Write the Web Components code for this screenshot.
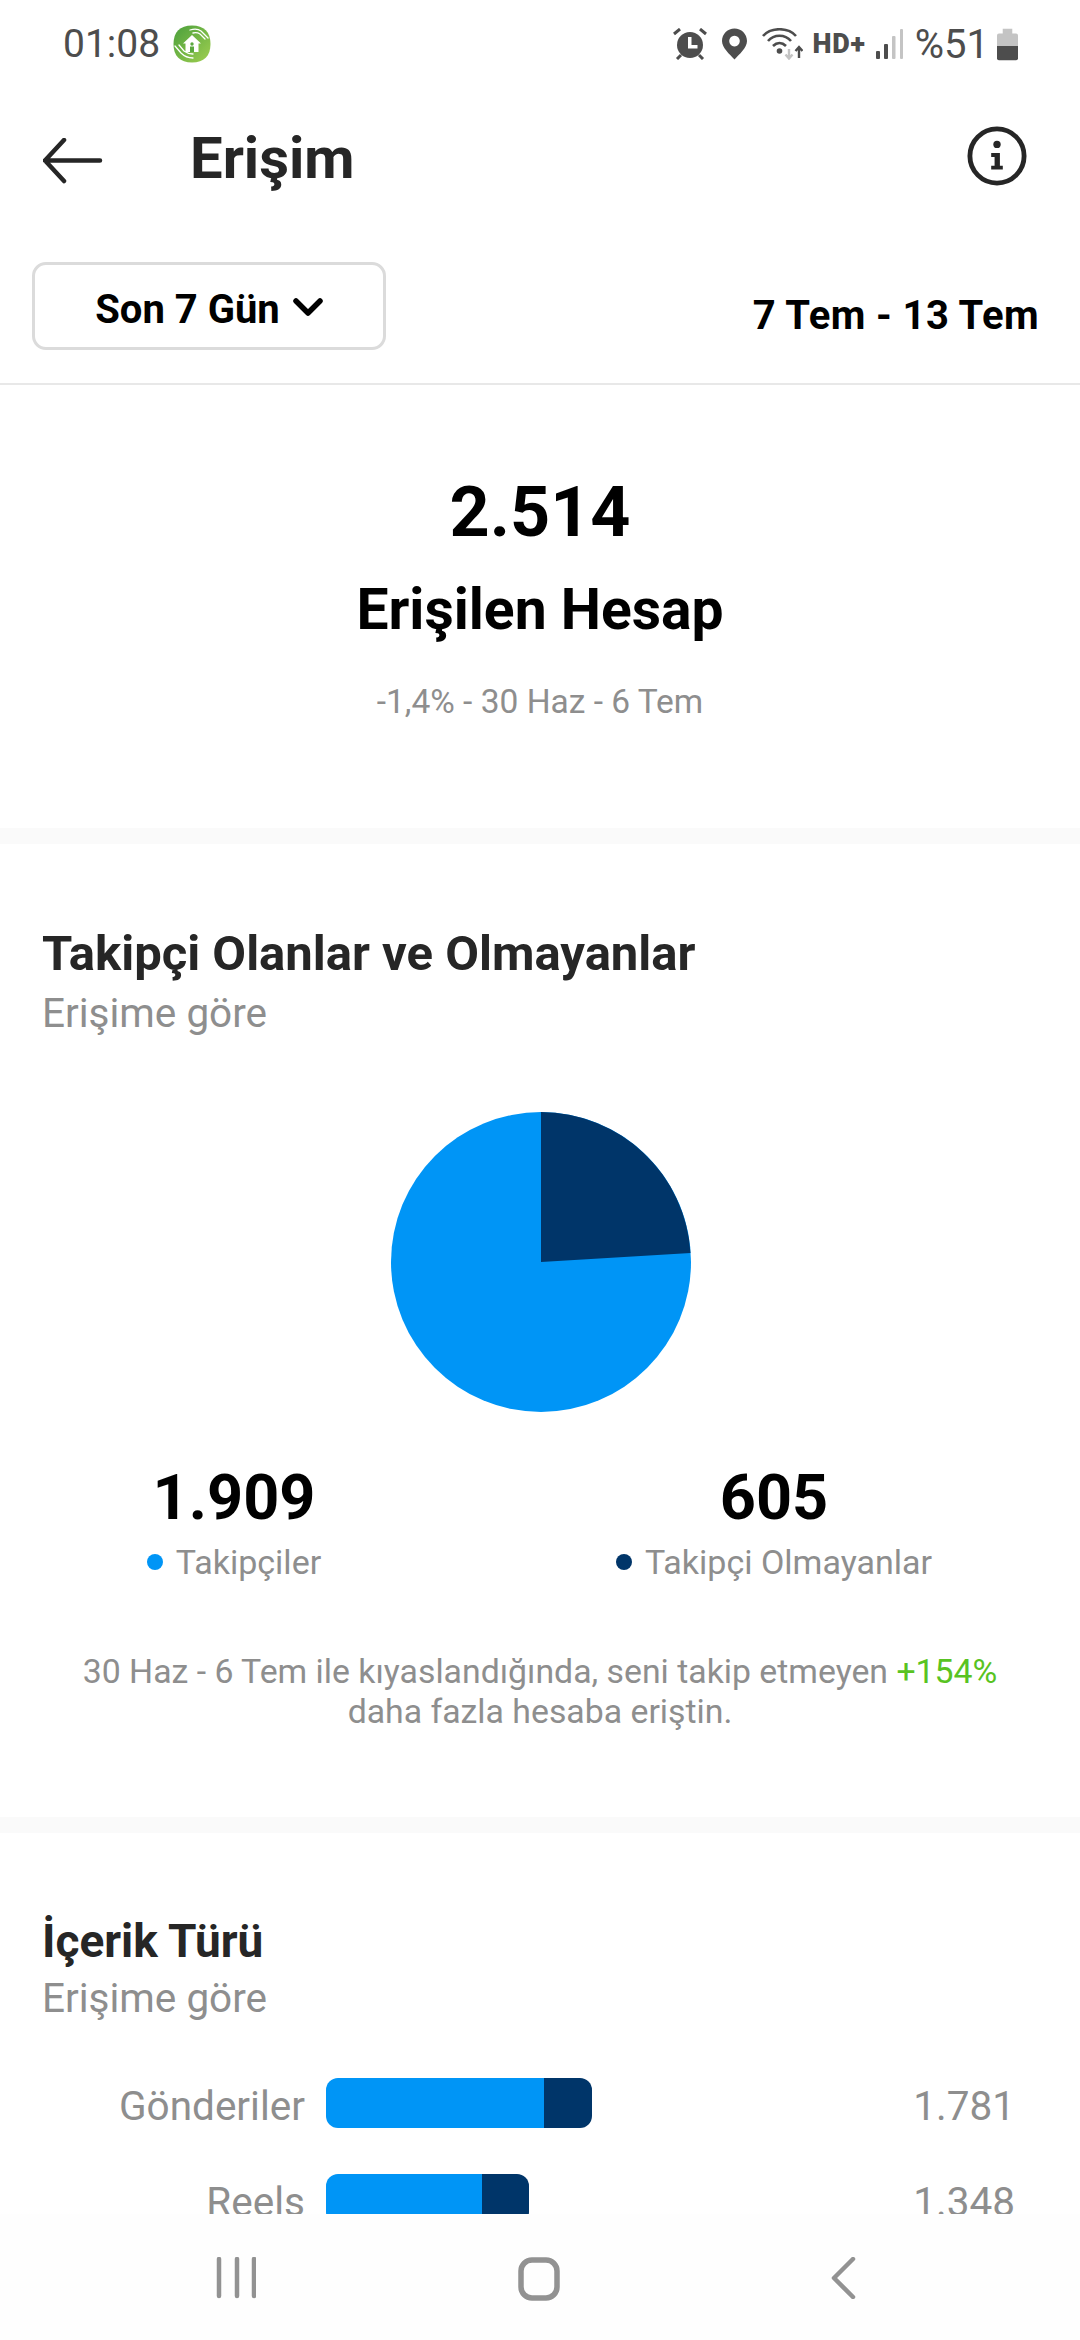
<!DOCTYPE html>
<html lang="tr">
<head>
<meta charset="utf-8">
<title>Erişim</title>
<style>
  html, body { margin: 0; padding: 0; background: #fff; }
  body { font-family: Roboto, "Liberation Sans", sans-serif; width: 1080px; height: 2340px; overflow: hidden; }
</style>
</head>
<body>
<phone-shell>
  <status-bar></status-bar>
  <app-header>Erişim</app-header>
  <range-filter label="Son 7 Gün" dates="7 Tem - 13 Tem"></range-filter>
  <reach-summary value="2.514" label="Erişilen Hesap" note="-1,4% - 30 Haz - 6 Tem"></reach-summary>
  <info-card heading="Takipçi Olanlar ve Olmayanlar" sub="Erişime göre" style="--top:82px;--size:49px;--sub-gap:6px">
    <pie-chart></pie-chart>
    <div style="display:flex">
      <stat-block value="1.909" label="Takipçiler" color="#0095f6" style="width:468px"></stat-block>
      <stat-block value="605" label="Takipçi Olmayanlar" color="#003569" style="width:612px"></stat-block>
    </div>
    <compare-note>30 Haz - 6 Tem ile kıyaslandığında, seni takip etmeyen <b>+154%</b><br>daha fazla hesaba eriştin.</compare-note>
  </info-card>
  <info-card heading="İçerik Türü" sub="Erişime göre" last style="--top:80px;--size:46px;--sub-gap:4px">
    <bar-row label="Gönderiler" value="1.781" a="218" b="48"></bar-row>
    <bar-row label="Reels" value="1.348" a="156" b="47"></bar-row>
  </info-card>
  <nav-bar slot="nav"></nav-bar>
</phone-shell>

<script>
// tiny helper, every element below just stamps its html into an open shadow root
function shadow(el, html) {
  el.attachShadow({mode: 'open'}).innerHTML = html
}

class PhoneShell extends HTMLElement {
  constructor() {
    super()
    shadow(this, `
    <style>
      :host { display: flex; flex-direction: column; width: 1080px; height: 2340px; background: #fff; }
      .scroll { height: 2214px; overflow: hidden; flex: none; }
      .nav { flex: 1; }
    </style>
    <div class="scroll"><slot></slot></div>
    <div class="nav"><slot name="nav"></slot></div>`)
  }
}

class StatusBar extends HTMLElement {
  constructor() {
    super()
    shadow(this, `
    <style>
      :host { display: flex; align-items: center; height: 88px; box-sizing: border-box; padding: 0 62px 0 63px; color: #4d4d4d; font-size: 39px; }
      .left, .right { display: flex; align-items: center; }
      .left { gap: 13px; flex: 1; }
      svg { display: block; }
    </style>
    <div class="left">
      <span>01:08</span>
      <svg width="38" height="38" viewBox="0 0 38 38">
        <defs><linearGradient id="g" x1="0" y1="0" x2="1" y2="1"><stop offset="0" stop-color="#4a9f3c"/><stop offset="1" stop-color="#a0cf50"/></linearGradient></defs>
        <path d="M19 .5 C31 .5 37.500 7 37.500 19 C37.500 31 31 37.500 19 37.500 C7 37.500 .5 31 .5 19 C.5 7 7 .5 19 .5 Z" fill="url(#g)"/>
        <path d="M19 10 L28 18.500 H25.500 V27 H12.500 V18.500 H10 Z" fill="#fff"/>
        <circle cx="19" cy="19" r="1.700" fill="#5aa83f"/>
        <path d="M17 27 V21.500 h4 V27" fill="#5aa83f"/>
        <path d="M17 5 Q24 3 28 6 L35 13 M20 8 Q24 7 27 9 L32 14 M2 21 L8 28 Q13 33 20 33 M6 20 L11 26 Q15 29 20 29" fill="none" stroke="#fff" stroke-width="1.300" stroke-linecap="round"/>
      </svg>
    </div>
    <div class="right">
      <svg width="34" height="32" viewBox="0 0 34 32" style="margin-right:15px">
        <circle cx="17" cy="17" r="13" fill="#4d4d4d"/>
        <path d="M15 9 h3.500 v8 h6 v3.500 h-9.500 Z" fill="#fff"/>
        <path d="M1 6 L7 1 M33 6 L27 1 M4 31 L8 27 M30 31 L26 27" stroke="#4d4d4d" stroke-width="3"/>
      </svg>
      <svg width="25" height="32" viewBox="0 0 26 32" style="margin-right:15px">
        <path fill-rule="evenodd" d="M13 0 C20 0 26 5.500 26 13 C26 20 18 27 13 32 C8 27 0 20 0 13 C0 5.500 6 0 13 0 Z M13 7.500 a5.500 5.500 0 1 0 0.010 0 Z" fill="#4d4d4d"/>
      </svg>
      <svg width="41" height="32" viewBox="0 0 41 32" style="margin-right:9px">
        <g fill="none" stroke="#4d4d4d" stroke-width="2.600">
          <path d="M1 8 C9 -1 26 -1 34 8"/>
          <path d="M6 13 C12 6 23 6 29 13"/>
          <path d="M11 18 C15 14 20 14 24 18"/>
        </g>
        <circle cx="17.500" cy="23" r="2.800" fill="#4d4d4d"/>
        <path d="M27 21 v9 M23.500 26.500 l3.500 4 l3.500 -4" fill="none" stroke="#c4c4c4" stroke-width="2.400"/>
        <path d="M37 30 v-11 M33.500 23 l3.500 -4 l3.500 4" fill="none" stroke="#4d4d4d" stroke-width="2.400"/>
      </svg>
      <span style="font-size:27px;font-weight:900;letter-spacing:.8px;margin-right:10px;">HD+</span>
      <svg width="27" height="30" viewBox="0 0 27 30" style="margin-right:12px">
        <rect x="0" y="22" width="4" height="8" rx="1" fill="#4d4d4d"/>
        <rect x="8" y="15" width="4" height="15" rx="1" fill="#4d4d4d"/>
        <rect x="16" y="7" width="3.500" height="23" rx="1" fill="#c4c4c4"/>
        <rect x="24" y="0" width="3" height="30" rx="1" fill="#c4c4c4"/>
      </svg>
      <span style="font-size:40px;margin-right:8px;">%51</span>
      <svg width="21" height="33" viewBox="0 0 22 33">
        <path d="M6 0 h10 v5 h4 a2 2 0 0 1 2 2 v11 h-22 v-11 a2 2 0 0 1 2 -2 h4 Z" fill="#c4c4c4"/>
        <path d="M0 18 h22 v13 a2 2 0 0 1 -2 2 h-18 a2 2 0 0 1 -2 -2 Z" fill="#4d4d4d"/>
      </svg>
    </div>`)
  }
}

class AppHeader extends HTMLElement {
  constructor() {
    super()
    shadow(this, `
    <style>
      :host { display: flex; align-items: center; height: 72px; margin-top: 34px; padding: 0 53px 0 43px; color: #262626; }
      .title { flex: 1; margin-left: 87px; font-size: 58px; font-weight: 700; line-height: 72px; }
      svg { display: block; }
    </style>
    <svg width="60" height="46" viewBox="0 0 60 46" style="margin-top:6px">
      <path d="M21 2 L2 22.500 L21 43 M2 22.500 H57" fill="none" stroke="#262626" stroke-width="4.500" stroke-linecap="round" stroke-linejoin="round"/>
    </svg>
    <div class="title"><slot></slot></div>
    <svg width="60" height="60" viewBox="0 0 62 62" style="margin-top:-4px">
      <circle cx="31" cy="31" r="28" fill="none" stroke="#262626" stroke-width="5"/>
      <circle cx="31" cy="19" r="3.800" fill="#262626"/>
      <path d="M25 28 h9 v13 h3 v4 h-12 v-4 h3.500 v-9 h-3.500 Z" fill="#262626"/>
    </svg>`)
  }
}

class RangeFilter extends HTMLElement {
  constructor() {
    super()
    shadow(this, `
    <style>
      :host { display: flex; align-items: center; justify-content: space-between; height: 88px; margin-top: 68px; padding: 0 41px 33px 32px; border-bottom: 2px solid #e8e8e8; color: #000; font-weight: 700; font-size: 40px; }
      .btn { display: flex; align-items: center; justify-content: center; gap: 13px; box-sizing: border-box; width: 354px; height: 88px; padding-top: 6px; border: 3px solid #dbdbdb; border-radius: 14px; }
      .dates { padding-top: 18px; letter-spacing: .4px; }
      svg { display: block; }
    </style>
    <div class="btn"><span>${this.getAttribute('label')}</span>
      <svg width="30" height="18" viewBox="0 0 30 18" style="margin-bottom:4px"><path d="M3 3 L15 15 L27 3" fill="none" stroke="#000" stroke-width="5.500" stroke-linecap="round" stroke-linejoin="round"/></svg>
    </div>
    <div class="dates">${this.getAttribute('dates')}</div>`)
  }
}

class ReachSummary extends HTMLElement {
  constructor() {
    super()
    shadow(this, `
    <style>
      :host { display: flex; flex-direction: column; align-items: center; height: 443px; border-bottom: 16px solid #fafafa; }
      .value { margin-top: 87px; font-size: 70px; font-weight: 700; line-height: 80px; color: #000; }
      .label { margin-top: 26px; font-size: 57px; font-weight: 700; line-height: 64px; color: #000; }
      .note { margin-top: 38px; font-size: 33.500px; line-height: 44px; color: #8e8e8e; }
    </style>
    <div class="value">${this.getAttribute('value')}</div>
    <div class="label">${this.getAttribute('label')}</div>
    <div class="note">${this.getAttribute('note')}</div>`)
  }
}

class InfoCard extends HTMLElement {
  constructor() {
    super()
    const last = this.hasAttribute('last')
    shadow(this, `
    <style>
      :host { display: block; ${last ? '' : 'border-bottom: 16px solid #fafafa;'} }
      .head { padding: var(--top) 42px 0; }
      h2 { margin: 0; font-size: var(--size); line-height: 56px; font-weight: 700; color: #262626; }
      p { margin: var(--sub-gap) 0 0; font-size: 40.500px; line-height: 50px; color: #8e8e8e; }
    </style>
    <div class="head">
      <h2>${this.getAttribute('heading')}</h2>
      <p>${this.getAttribute('sub')}</p>
    </div>
    <slot></slot>`)
  }
}

class PieChart extends HTMLElement {
  constructor() {
    super()
    shadow(this, `
    <style>
      :host { display: flex; justify-content: center; margin-top: 74px; padding-left: 2px; }
      svg { display: block; }
    </style>
    <svg width="300" height="300" viewBox="-150 -150 300 300">
      <circle r="150" fill="#0095f6"/>
      <path d="M0 0 V-150 A150 150 0 0 1 149.500 -9 Z" fill="#003569"/>
    </svg>`)
  }
}

class StatBlock extends HTMLElement {
  constructor() {
    super()
    const color = this.getAttribute('color')
    shadow(this, `
    <style>
      :host { display: flex; flex-direction: column; align-items: center; margin-top: 48px; }
      .value { font-size: 63px; font-weight: 700; line-height: 76px; color: #000; }
      .label { display: flex; align-items: center; gap: 13px; margin-top: 4px; font-size: 34px; line-height: 44px; color: #8e8e8e; }
      i { width: 16px; height: 16px; border-radius: 50%; background: ${color}; }
    </style>
    <div class="value">${this.getAttribute('value')}</div>
    <div class="label"><i></i><span>${this.getAttribute('label')}</span></div>`)
  }
}

class CompareNote extends HTMLElement {
  constructor() {
    super()
    shadow(this, `
    <style>
      :host { display: block; margin-top: 68px; padding-bottom: 85px; text-align: center; font-size: 33.800px; line-height: 40px; color: #8e8e8e; }
      ::slotted(b) { font-weight: 400; color: #58c322; }
    </style>
    <slot></slot>`)
  }
}

class BarRow extends HTMLElement {
  constructor() {
    super()
    const a = this.getAttribute('a'), b = this.getAttribute('b')
    shadow(this, `
    <style>
      :host { display: flex; align-items: center; height: 50px; margin-top: 46px; padding-right: 65px; font-size: 40.500px; color: #8e8e8e; }
      :host(:first-of-type) { margin-top: 55px; }
      .label { width: 305px; text-align: right; margin-right: 21px; padding-top: 5px; }
      .bar { display: flex; height: 50px; border-radius: 12px; overflow: hidden; }
      .a { width: ${a}px; background: #0095f6; }
      .b { width: ${b}px; background: #003569; }
      .value { margin-left: auto; padding-top: 5px; }
    </style>
    <div class="label">${this.getAttribute('label')}</div>
    <div class="bar"><div class="a"></div><div class="b"></div></div>
    <div class="value">${this.getAttribute('value')}</div>`)
  }
}

class NavBar extends HTMLElement {
  constructor() {
    super()
    shadow(this, `
    <style>
      :host { display: block; height: 126px; background: #fefefe; }
      .row { display: flex; height: 100%; box-sizing: border-box; padding: 0 0 0 216px; }
      svg { display: block; margin-top: 43px; }
    </style>
    <div class="row">
      <svg width="40" height="42" viewBox="0 0 40 42" style="margin-right:262px"><path d="M3 2 V39 M21 2 V39 M38 2 V39" stroke="#929292" stroke-width="4.500" stroke-linecap="round" fill="none"/></svg>
      <svg width="42" height="44" viewBox="0 0 42 44" style="margin-right:270px"><rect x="3" y="3" width="36" height="38" rx="11" fill="none" stroke="#929292" stroke-width="5.500"/></svg>
      <svg width="26" height="42" viewBox="0 0 26 42"><path d="M23 2 L4 21 L23 40" stroke="#929292" stroke-width="4.500" stroke-linecap="round" stroke-linejoin="round" fill="none"/></svg>
    </div>`)
  }
}

customElements.define('phone-shell', PhoneShell)
customElements.define('status-bar', StatusBar)
customElements.define('app-header', AppHeader)
customElements.define('range-filter', RangeFilter)
customElements.define('reach-summary', ReachSummary)
customElements.define('info-card', InfoCard)
customElements.define('pie-chart', PieChart)
customElements.define('stat-block', StatBlock)
customElements.define('compare-note', CompareNote)
customElements.define('bar-row', BarRow)
customElements.define('nav-bar', NavBar)
</script>
</body>
</html>
